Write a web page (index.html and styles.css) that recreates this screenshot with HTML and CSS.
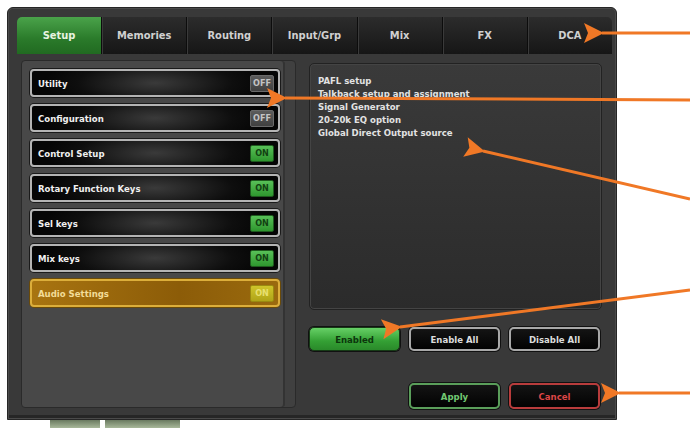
FILE: index.html
```html
<!DOCTYPE html>
<html lang="en">
<head>
<meta charset="UTF-8">
<title>Setup - Utility</title>
<link rel="stylesheet" href="styles.css">
</head>
<body>
	<div class="console">
		<ul class="tabs">
			<li class="tab active">Setup</li>
			<li class="tab">Memories</li>
			<li class="tab">Routing</li>
			<li class="tab">Input/Grp</li>
			<li class="tab">Mix</li>
			<li class="tab">FX</li>
			<li class="tab">DCA</li>
		</ul>
		<div class="main">
			<div class="menu">
				<div class="item"><span>Utility</span><b class="badge off">OFF</b></div>
				<div class="item"><span>Configuration</span><b class="badge off">OFF</b></div>
				<div class="item"><span>Control Setup</span><b class="badge on">ON</b></div>
				<div class="item"><span>Rotary Function Keys</span><b class="badge on">ON</b></div>
				<div class="item"><span>Sel keys</span><b class="badge on">ON</b></div>
				<div class="item"><span>Mix keys</span><b class="badge on">ON</b></div>
				<div class="item current"><span>Audio Settings</span><b class="badge on">ON</b></div>
			</div>
			<div class="side">
				<div class="info">
					<p>PAFL setup</p>
					<p>Talkback setup and assignment</p>
					<p>Signal Generator</p>
					<p>20-20k EQ option</p>
					<p>Global Direct Output source</p>
				</div>
				<div class="btns">
					<button class="btn enabled">Enabled</button>
					<button class="btn">Enable All</button>
					<button class="btn">Disable All</button>
				</div>
				<div class="btns confirm">
					<button class="btn apply">Apply</button>
					<button class="btn cancel">Cancel</button>
				</div>
			</div>
		</div>
	</div>
	<div class="under">
		<i></i><i></i>
	</div>

	<!-- callout arrows -->
	<svg class="arrows" width="690" height="428" viewBox="0 0 690 428">
		<defs>
			<marker id="head" markerUnits="userSpaceOnUse" markerWidth="24" markerHeight="24" refX="2" refY="12" orient="auto">
				<path d="M0,12 L20,2 L16,12 L20,22 Z" fill="#f07826"/>
			</marker>
		</defs>
		<g stroke="#f07826" stroke-width="3" fill="none">
			<line x1="690" y1="33" x2="602" y2="33" marker-end="url(#head)"/>
			<line x1="690" y1="100" x2="285" y2="98" marker-end="url(#head)"/>
			<line x1="690" y1="199" x2="483" y2="151" marker-end="url(#head)"/>
			<line x1="690" y1="290" x2="400" y2="327" marker-end="url(#head)"/>
			<line x1="690" y1="393" x2="619" y2="393" marker-end="url(#head)"/>
		</g>
	</svg>
</body>
</html>
```

FILE: styles.css
```css
body {
	margin: 0;
	background-color: #fff;
	font-family: "DejaVu Sans Condensed", "DejaVu Sans", sans-serif;
	font-stretch: condensed;
	font-weight: bold;
	position: relative;
	width: 690px;
	height: 428px;
	overflow: hidden;
}
ul {
	margin: 0;
	padding: 0;
	list-style: none;
}
p {
	margin: 0;
}
.console {
	margin: 7px 0 0 7px;
	width: 610px;
	height: 413px;
	box-sizing: border-box;
	padding: 9px 5px 0 9px;
	background-color: #393939;
	border: 1px solid #262626;
	border-radius: 6px 6px 0 0;
	box-shadow: inset 0 0 0 1px #4a4a4a, inset 0 -4px 0 #262626;
}
.tabs {
	display: flex;
	width: 595px;
	height: 37px;
	background: linear-gradient(#2c2c2c, #161616);
	border-radius: 5px 5px 0 0;
}
.tab {
	flex: 1;
	display: flex;
	align-items: center;
	justify-content: center;
	color: #d0d0d0;
	font-size: 11px;
	border-left: 1px solid #0c0c0c;
	box-shadow: inset 1px 0 0 #3a3a3a;
}
.tab:first-child {
	border-left: none;
	box-shadow: none;
}
.tab.active {
	background: linear-gradient(#4aa34a, #2a7a2a 60%, #216a21);
	color: #e8f4e0;
	border-radius: 5px 0 0 0;
}
.main {
	display: flex;
	margin-top: 6px;
}
.menu {
	margin-left: 4px;
	width: 275px;
	height: 348px;
	box-sizing: border-box;
	padding: 8px 0 0 8px;
	background-color: #484848;
	border: 1px solid #2a2a2a;
	border-radius: 4px;
	box-shadow: inset -10px 0 0 #404040, inset -12px 0 0 #333;
	display: flex;
	flex-direction: column;
	gap: 7px;
}
.item {
	width: 250px;
	height: 28px;
	box-sizing: border-box;
	display: flex;
	align-items: center;
	justify-content: space-between;
	padding: 0 4px 0 6px;
	background: radial-gradient(ellipse 45% 120% at 50% 50%, #3a3a3a, #0e0e0e 70%, #050505);
	border: 2px solid #b4b4b4;
	border-radius: 4px;
	box-shadow: 0 0 0 1px #1a1a1a;
	color: #f0f0f0;
	font-size: 9.5px;
}
.badge {
	width: 24px;
	height: 17px;
	box-sizing: border-box;
	display: flex;
	align-items: center;
	justify-content: center;
	font-size: 9px;
	border-radius: 2px;
}
.badge.off {
	background: linear-gradient(#5c5c5c, #404040);
	color: #c4c4c4;
	border: 1px solid #6a6a6a;
}
.badge.on {
	background: linear-gradient(#58c058, #2e962e);
	color: #124212;
	border: 1px solid #1e5a1e;
}
.item.current {
	background: linear-gradient(to right, #a87410, #8c5c08 60%, #9a6a0e);
	border-color: #dcae3a;
	box-shadow: 0 0 0 1px #6a4a08;
	color: #f2dc98;
}
.item.current .badge {
	background: linear-gradient(#cfc52a, #b0a418);
	color: #e8e070;
	border-color: #9a8a10;
}
.side {
	margin-left: 13px;
	width: 293px;
}
.info {
	margin-top: 3px;
	height: 247px;
	box-sizing: border-box;
	padding: 10px 8px;
	background: linear-gradient(#3a3a3a, #2b2b2b);
	border: 1px solid #222;
	border-radius: 5px;
	box-shadow: inset 0 0 0 1px #444;
	color: #e2e2e2;
	font-size: 9.5px;
	line-height: 13px;
}
.btns {
	display: flex;
	gap: 9px;
	margin-top: 17px;
}
.btn {
	width: 91px;
	height: 24px;
	padding: 0;
	font-family: inherit;
	font-stretch: condensed;
	font-weight: bold;
	font-size: 9.5px;
	background: linear-gradient(#141414, #020202);
	color: #dcdcdc;
	border: 2px solid #a8a8a8;
	border-radius: 5px;
	box-shadow: 0 0 0 1px #111;
}
.btn.enabled {
	background: linear-gradient(#66d066, #34a034 60%, #2a8a2a);
	color: #0c360c;
	border: 1px solid #163a16;
}
.confirm {
	justify-content: flex-end;
	margin-top: 32px;
	padding-right: 2px;
}
.confirm .btn {
	height: 26px;
}
.btn.apply {
	border-color: #5a9e5a;
	color: #72c872;
}
.btn.cancel {
	border-color: #b83c3c;
	color: #dc4646;
}
.under {
	display: flex;
	gap: 5px;
	margin-left: 50px;
}
.under i {
	width: 50px;
	height: 8px;
	background: linear-gradient(#6a7a60, #a8b89a);
}
.under i + i {
	width: 75px;
}
.arrows {
	position: absolute;
	left: 0;
	top: 0;
}
```
